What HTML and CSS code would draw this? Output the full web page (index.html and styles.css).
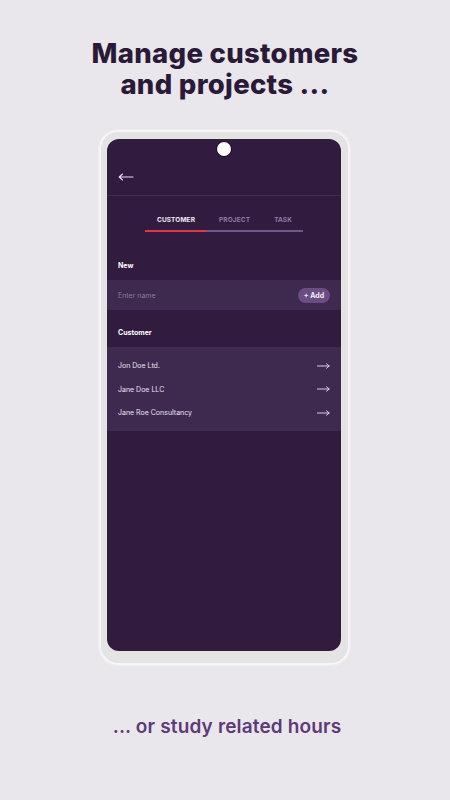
FILE: index.html
```html
<!DOCTYPE html>
<html>
<head>
<meta charset="utf-8">
<link rel="stylesheet" href="styles.css">
</head>
<body>
<div class="page">
  <h1 class="title">Manage customers<br>and projects ...</h1>
  <div class="phone">
    <div class="screen">
      <div class="camera"></div>
      <div class="header">
        <svg class="back" width="16" height="8" viewBox="0 0 16 8"><path d="M15 4H1.5M4.5 1L1.2 4L4.5 7" fill="none" stroke="#e6dff0" stroke-width="1.1" stroke-linecap="round" stroke-linejoin="round"/></svg>
      </div>
      <div class="tabs">
        <div class="tab-labels">
          <span class="tab active">CUSTOMER</span>
          <span class="tab">PROJECT</span>
          <span class="tab">TASK</span>
        </div>
        <div class="tab-bar"><div class="tab-ind"></div></div>
      </div>
      <div class="label new-label">New</div>
      <div class="input-row">
        <span class="placeholder">Enter name</span>
        <span class="add-btn">+ Add</span>
      </div>
      <div class="label cust-label">Customer</div>
      <div class="list">
        <div class="item"><span>Jon Doe Ltd.</span><svg width="13" height="6" viewBox="0 0 13 6"><path d="M0.5 3H12M9.5 0.8L12.2 3L9.5 5.2" fill="none" stroke="#e6dff0" stroke-width="0.9" stroke-linecap="round" stroke-linejoin="round"/></svg></div>
        <div class="item"><span>Jane Doe LLC</span><svg width="13" height="6" viewBox="0 0 13 6"><path d="M0.5 3H12M9.5 0.8L12.2 3L9.5 5.2" fill="none" stroke="#e6dff0" stroke-width="0.9" stroke-linecap="round" stroke-linejoin="round"/></svg></div>
        <div class="item"><span>Jane Roe Consultancy</span><svg width="13" height="6" viewBox="0 0 13 6"><path d="M0.5 3H12M9.5 0.8L12.2 3L9.5 5.2" fill="none" stroke="#e6dff0" stroke-width="0.9" stroke-linecap="round" stroke-linejoin="round"/></svg></div>
      </div>
    </div>
  </div>
  <p class="subtitle">... or study related hours</p>
</div>
</body>
</html>
```

FILE: styles.css
```css
* { box-sizing: border-box; }
html, body { margin: 0; padding: 0; }
body {
  background: #e9e7ec;
  font-family: "Inter", "Open Sans", sans-serif;
  width: 450px;
  height: 800px;
  overflow: hidden;
}
.page {
  display: flex;
  flex-direction: column;
  align-items: center;
}
.title {
  margin: 38px 0 0 0;
  font-size: 27.5px;
  line-height: 31px;
  font-weight: 800;
  color: #2a1a38;
  text-align: center;
  letter-spacing: 0.3px;
}
.phone {
  margin-top: 30px;
  margin-left: -1px;
  width: 251px;
  height: 535px;
  padding: 9px 9px 14px 8px;
  border-radius: 19px;
  background: #e4e4e4;
  box-shadow: inset 0 0 0 2px #f6f6f6, 0 0 0 1px #eeeeee;
}
.screen {
  position: relative;
  width: 100%;
  height: 100%;
  background: #311c40;
  border-radius: 12px;
  overflow: hidden;
  color: #ffffff;
}
.camera {
  position: absolute;
  left: 110px;
  top: 3px;
  width: 14px;
  height: 14px;
  border-radius: 50%;
  background: #ffffff;
  box-shadow: 0 0 0 1px #1a0f22;
}
.header {
  height: 57px;
  border-bottom: 1px solid #40304f;
  display: flex;
  align-items: flex-start;
  padding: 34px 0 0 11px;
}
.back { display: block; }
.tabs {
  width: 158px;
  margin: 18px auto 0 auto;
}
.tab-labels {
  display: flex;
  justify-content: space-between;
  padding: 0 11px 0 12px;
  height: 12px;
  align-items: center;
}
.tab {
  font-size: 6.5px;
  font-weight: 700;
  color: #8e7ea3;
  letter-spacing: 0.1px;
}
.tab.active { color: #f2ecf7; }
.tab-bar {
  margin-top: 4px;
  height: 2px;
  background: #6c5a86;
}
.tab-ind {
  width: 61px;
  height: 2px;
  background: #e0364a;
}
.label {
  font-size: 7px;
  font-weight: 700;
  color: #ffffff;
  padding-left: 11px;
}
.new-label { margin-top: 29px; height: 10px; }
.input-row {
  margin-top: 9px;
  height: 30px;
  background: #3d2a4e;
  display: flex;
  align-items: center;
  justify-content: space-between;
  padding: 0 11px;
}
.placeholder {
  font-size: 7px;
  color: #8a7a9c;
}
.add-btn {
  background: #6b4c83;
  color: #f4eef8;
  font-size: 7px;
  font-weight: 700;
  border-radius: 8px;
  height: 15px;
  width: 32px;
  display: flex;
  align-items: center;
  justify-content: center;
}
.cust-label { margin-top: 18px; height: 10px; }
.list {
  margin-top: 9px;
  height: 84px;
  background: #3e2a4f;
  padding: 7px 11px 0 11px;
  display: flex;
  flex-direction: column;
}
.item {
  height: 23.5px;
  display: flex;
  align-items: center;
  justify-content: space-between;
  font-size: 7px;
  color: #e9e2f0;
}
.item svg { display: block; }
.subtitle {
  margin: 50px 0 0 4px;
  font-size: 19px;
  line-height: 24px;
  font-weight: 600;
  color: #5d3a78;
  text-align: center;
  letter-spacing: 0.15px;
}
```
